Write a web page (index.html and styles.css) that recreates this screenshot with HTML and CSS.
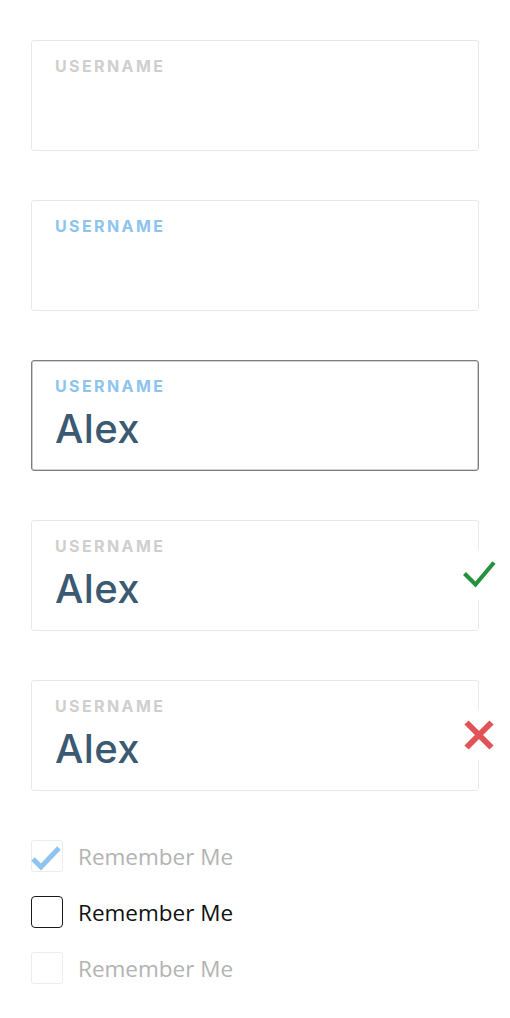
FILE: index.html
```html
<!DOCTYPE html>
<html>
<head>
<meta charset="utf-8">
<link rel="stylesheet" href="styles.css">
</head>
<body>
<div class="page">
  <div class="field">
    <div class="label">USERNAME</div>
    <div class="value"></div>
  </div>
  <div class="field">
    <div class="label label-active">USERNAME</div>
    <div class="value"></div>
  </div>
  <div class="field field-focus">
    <div class="label label-active">USERNAME</div>
    <div class="value">Alex</div>
  </div>
  <div class="field">
    <div class="label">USERNAME</div>
    <div class="value">Alex</div>
    <div class="status">
      <svg width="34" height="32" viewBox="0 0 34 32"><path d="M2.5 14.5 L13.5 25.5 L32 3.5" fill="none" stroke="#25913f" stroke-width="4.2"/></svg>
    </div>
  </div>
  <div class="field">
    <div class="label">USERNAME</div>
    <div class="value">Alex</div>
    <div class="status">
      <svg width="32" height="32" viewBox="0 0 32 32"><path d="M3.5 3.5 L28.5 28.5 M28.5 3.5 L3.5 28.5" fill="none" stroke="#e05356" stroke-width="6"/></svg>
    </div>
  </div>
  <div class="checks">
    <div class="check-row">
      <span class="box box-light">
        <svg class="tick" width="34" height="30" viewBox="0 0 34 30"><path d="M3 15 L11 23 L29 4" fill="none" stroke="#8ec4ef" stroke-width="5"/></svg>
      </span>
      <span class="check-text muted">Remember Me</span>
    </div>
    <div class="check-row">
      <span class="box box-dark"></span>
      <span class="check-text">Remember Me</span>
    </div>
    <div class="check-row">
      <span class="box box-light"></span>
      <span class="check-text muted">Remember Me</span>
    </div>
  </div>
</div>
</body>
</html>
```

FILE: styles.css
```css
html, body {
  margin: 0;
  padding: 0;
  background: #ffffff;
}

.page {
  padding: 40px 0 0 31px;
  display: flex;
  flex-direction: column;
  gap: 49px;
  width: 448px;
}

.field {
  position: relative;
  box-sizing: border-box;
  height: 111px;
  border: 1px solid #e8e8e8;
  border-radius: 3px;
  padding: 15px 0 0 23px;
}

.field-focus {
  border: 1px solid #7d7d7d;
  box-shadow: inset 0 0 0 0.6px #a8a8a8;
}

.label {
  font-family: "Inter", sans-serif;
  font-weight: 700;
  font-size: 16px;
  letter-spacing: 2.4px;
  color: #cfcfcf;
  line-height: 20px;
}

.label-active {
  color: #8dc4ee;
}

.value {
  font-family: "Inter", sans-serif;
  font-weight: 500;
  font-size: 40px;
  letter-spacing: 0.4px;
  color: #3b5a72;
  line-height: 48px;
  margin-top: 9px;
  height: 48px;
}

.status {
  position: absolute;
  right: -26px;
  top: 29px;
  width: 50px;
  height: 50px;
  background: #ffffff;
  display: flex;
  align-items: center;
  justify-content: center;
}

.checks {
  display: flex;
  flex-direction: column;
  gap: 24px;
}

.check-row {
  display: flex;
  align-items: center;
  gap: 15px;
  height: 32px;
}

.box {
  position: relative;
  box-sizing: border-box;
  width: 32px;
  height: 32px;
  border-radius: 3px;
  flex: none;
}

.box-light {
  border: 1px solid #ececec;
}

.box-dark {
  border: 1.5px solid #1a1a1a;
  border-radius: 4px;
}

.tick {
  position: absolute;
  left: -2px;
  top: 3px;
}

.check-text {
  font-family: "Open Sans", sans-serif;
  font-size: 22.5px;
  color: #111111;
}

.muted {
  color: #b3b3b3;
}
```
